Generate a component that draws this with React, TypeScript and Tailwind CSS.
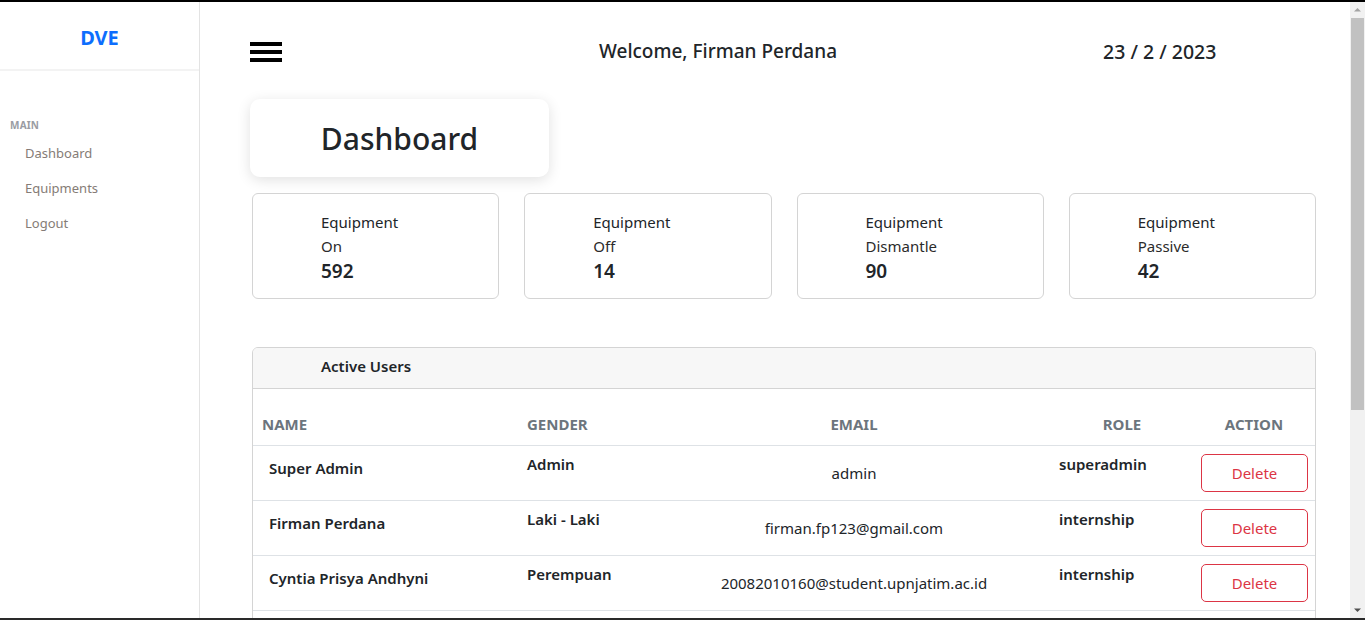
import React from "react";

const stats = [
  { label: "On", value: 592 },
  { label: "Off", value: 14 },
  { label: "Dismantle", value: 90 },
  { label: "Passive", value: 42 },
];

const users = [
  { name: "Super Admin", gender: "Admin", email: "admin", role: "superadmin" },
  { name: "Firman Perdana", gender: "Laki - Laki", email: "firman.fp123@gmail.com", role: "internship" },
  { name: "Cyntia Prisya Andhyni", gender: "Perempuan", email: "20082010160@student.upnjatim.ac.id", role: "internship" },
];

const cols = "grid grid-cols-[266px_138px_394px_142px_122px]";

const Sidebar = () => (
  <aside className="w-[200px] shrink-0 border-r border-[#e3e3e3] bg-white">
    <div className="h-[69px] border-b-2 border-[#f3f3f3] flex justify-center pt-[22px]">
      <span className="text-[20px] leading-[28px] font-bold text-[#0d6efd]">DVE</span>
    </div>
    <div className="pt-[49px] pl-[10px]">
      <div className="text-[10px] font-bold text-[#9a9ca3] leading-none tracking-[0.2px]">MAIN</div>
      <nav className="mt-[14px] pl-[15px] flex flex-col gap-[16px] text-[13px] text-[#857c76]">
        <span className="leading-[19px]">Dashboard</span>
        <span className="leading-[19px]">Equipments</span>
        <span className="leading-[18px]">Logout</span>
      </nav>
    </div>
  </aside>
);

// classic browser scrollbar drawn beside the page
const ScrollBar = () => (
  <div className="w-[15px] shrink-0 bg-[#f1f1f1] flex flex-col items-center">
    <svg width="15" height="15" viewBox="0 0 15 15" className="shrink-0">
      <path d="M4 9.5 L7.5 6 L11 9.5 Z" fill="#a3a3a3" />
    </svg>
    <div className="w-[13px] h-[392px] mt-[1px] bg-[#c1c1c1]" />
    <div className="flex-1" />
    <svg width="15" height="15" viewBox="0 0 15 15" className="shrink-0">
      <path d="M4 5.5 L7.5 9 L11 5.5 Z" fill="#505050" />
    </svg>
  </div>
);

const StatCard = ({ label, value }: { label: string; value: number }) => (
  <div className="h-[106px] rounded-[6px] border border-[#d4d4d4] pl-[68px] pt-[16px] text-[#212529]">
    <div className="text-[15px] leading-[24px]">Equipment</div>
    <div className="text-[15px] leading-[24px] text-[#2b2b2b]">{label}</div>
    <div className="text-[19px] font-semibold leading-[26px]">{value}</div>
  </div>
);

const App = () => {
  return (
    <div
      className="h-[620px] border-t-2 border-b-2 border-t-black border-b-[#2a2a2a] bg-white flex overflow-hidden"
      style={{ fontFamily: '"Noto Sans", "Open Sans", sans-serif' }}
    >
      <div className="flex flex-1 min-w-0">
        <Sidebar />
        <main className="flex-1 pl-[50px] pr-[34px] text-[#212529]">
          <header className="h-[97px] flex items-center pt-[2px]">
            <button type="button" className="flex flex-col gap-[4px] w-[32px]">
              <span className="h-[4px] bg-black" />
              <span className="h-[4px] bg-black" />
              <span className="h-[4px] bg-black" />
            </button>
            <div className="flex-1 text-center text-[19px] font-medium pl-[51px]">Welcome, Firman Perdana</div>
            <div className="w-[213px] text-[19.5px] font-medium">23 / 2 / 2023</div>
          </header>

          <div className="w-[299px] h-[78px] rounded-[10px] bg-white shadow-[0_3px_14px_rgba(0,0,0,0.12)] flex items-center justify-center">
            <h1 className="text-[30px] font-medium">Dashboard</h1>
          </div>

          <div className="mt-[16px] ml-[2px] grid grid-cols-4 gap-x-[25px]">
            {stats.map((s) => (
              <StatCard key={s.label} label={s.label} value={s.value} />
            ))}
          </div>

          <section className="mt-[48px] ml-[2px] rounded-[6px] border border-[#d4d4d4] overflow-hidden">
            <div className="h-[41px] bg-[#f7f7f7] border-b border-[#d4d4d4] pl-[68px] pb-[3px] flex items-center">
              <span className="text-[15px] font-semibold">Active Users</span>
            </div>
            <div className="pt-[17px] pb-[60px]">
              <div className={`${cols} h-[40px] items-center pb-[2px] border-b border-[#dee2e6] text-[15px] font-bold text-[#6c757d]`}>
                <div className="pl-[9px]">NAME</div>
                <div className="pl-[8px]">GENDER</div>
                <div className="text-center">EMAIL</div>
                <div className="text-center">ROLE</div>
                <div className="text-center">ACTION</div>
              </div>
              {users.map((u) => (
                <div key={u.email} className={`${cols} h-[55px] border-b border-[#dee2e6] text-[15px]`}>
                  <div className="pl-[16px] pt-[11px] font-semibold">{u.name}</div>
                  <div className="pl-[8px] pt-[7px] font-semibold">{u.gender}</div>
                  <div className="text-center pt-[16px]">{u.email}</div>
                  <div className="pl-[8px] pt-[7px] font-semibold">{u.role}</div>
                  <div className="flex items-center justify-end pr-[7px]">
                    <button
                      type="button"
                      className="w-[107px] h-[38px] rounded-[5px] border border-[#dc3545] text-[15px] text-[#dc3545]"
                    >
                      Delete
                    </button>
                  </div>
                </div>
              ))}
            </div>
          </section>
        </main>
      </div>
      <ScrollBar />
    </div>
  );
};

export default App;
